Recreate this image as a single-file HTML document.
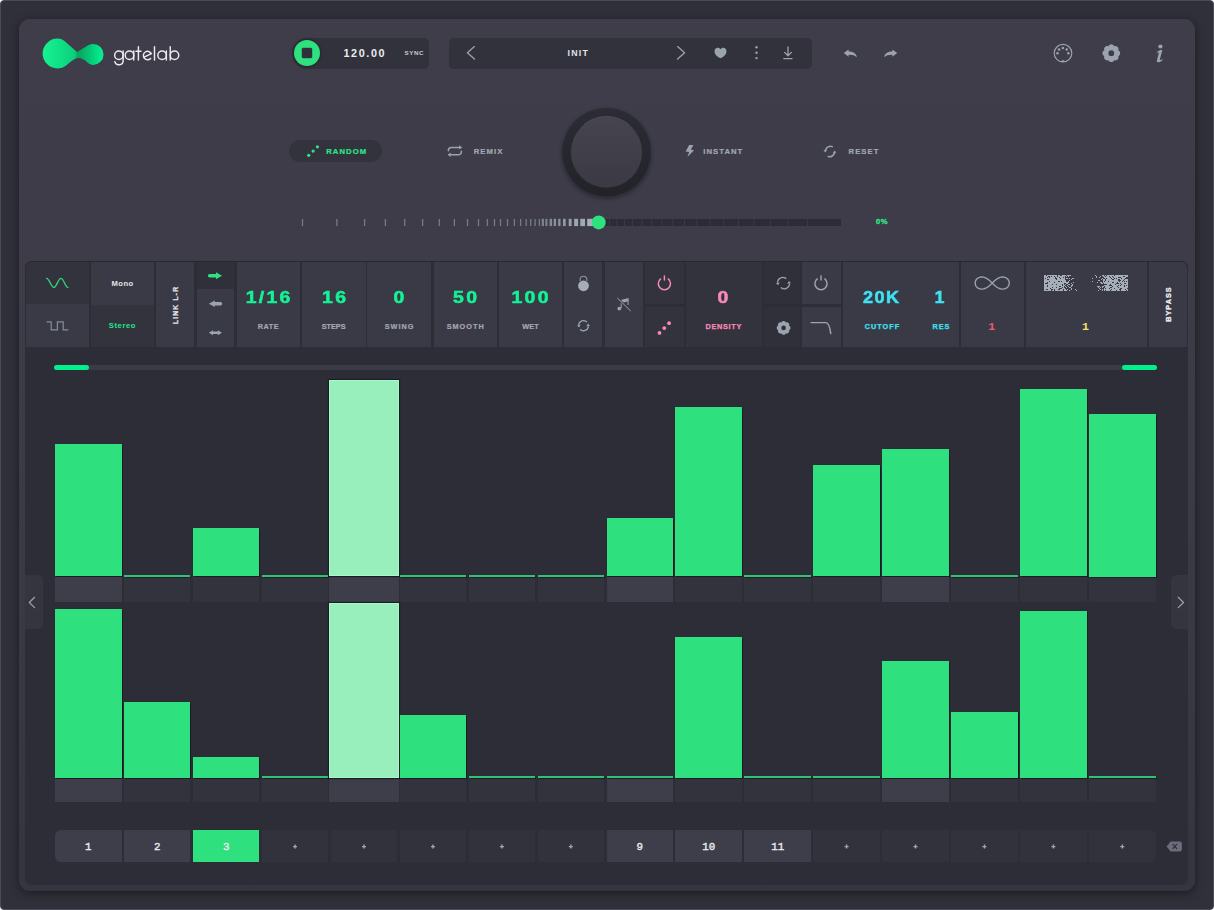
<!DOCTYPE html>
<html><head><meta charset="utf-8"><title>gatelab</title>
<style>html,body{margin:0;padding:0;background:#fff;width:1214px;height:910px;overflow:hidden}</style>
</head><body>
<div style="position:relative;width:1214px;height:910px;overflow:hidden">
<div style="position:absolute;left:0;top:0;width:1214px;height:910px;box-sizing:border-box;border:1px solid #4a4a58;border-radius:4px;background:#30303a;overflow:hidden"></div><div style="position:absolute;left:19px;top:19px;width:1176px;height:872px;background:linear-gradient(#3e3d49,#3c3b47 40%,#36353f);border-radius:11px;box-shadow:0 2px 10px rgba(0,0,0,.45);"></div><div style="position:absolute;left:292px;top:38px;width:137px;height:31px;background:#32323c;border-radius:15.5px 5px 5px 15.5px;"></div><div style="position:absolute;left:294.1px;top:39.9px;width:26.4px;height:26.4px;background:#2fe07f;border-radius:50%;box-shadow:0 0 3px 0.5px rgba(20,16,28,.5);"></div><div style="position:absolute;left:302.3px;top:48.2px;width:9.9px;height:10.2px;background:#30303b;border-radius:1.3px;box-shadow:0 0 0.5px 0.5px rgba(20,16,28,.35);"></div><div style="position:absolute;left:164.00px;top:48.26px;width:400px;text-align:center;font:700 10.8px/10.8px 'Liberation Sans', sans-serif;letter-spacing:1.6px;text-indent:1.6px;color:#ececf0;white-space:nowrap;">120.00</div><div style="position:absolute;left:214.00px;top:50.15px;width:400px;text-align:center;font:700 6.2px/6.2px 'Liberation Sans', sans-serif;letter-spacing:0.6px;text-indent:0.6px;color:#c9cad2;white-space:nowrap;">SYNC</div><div style="position:absolute;left:449px;top:38px;width:363px;height:31px;background:#32323c;border-radius:5px;"></div><div style="position:absolute;left:377.70px;top:48.85px;width:400px;text-align:center;font:700 8.8px/8.8px 'Liberation Sans', sans-serif;letter-spacing:1.2px;text-indent:1.2px;color:#e2e2e8;white-space:nowrap;">INIT</div><div style="position:absolute;left:289px;top:139.5px;width:93px;height:22.8px;background:#33333e;border-radius:12px;"></div><div style="position:absolute;left:146.20px;top:147.58px;width:400px;text-align:center;font:700 7.7px/7.7px 'Liberation Sans', sans-serif;letter-spacing:1.05px;text-indent:1.05px;color:#2ee68a;white-space:nowrap;-webkit-text-stroke:0.2px #2ee68a">RANDOM</div><div style="position:absolute;left:288.00px;top:147.58px;width:400px;text-align:center;font:700 7.7px/7.7px 'Liberation Sans', sans-serif;letter-spacing:1.05px;text-indent:1.05px;color:#a3a8b3;white-space:nowrap;-webkit-text-stroke:0.2px #a3a8b3">REMIX</div><div style="position:absolute;left:522.80px;top:147.58px;width:400px;text-align:center;font:700 7.7px/7.7px 'Liberation Sans', sans-serif;letter-spacing:1.05px;text-indent:1.05px;color:#a3a8b3;white-space:nowrap;-webkit-text-stroke:0.2px #a3a8b3">INSTANT</div><div style="position:absolute;left:663.50px;top:147.58px;width:400px;text-align:center;font:700 7.7px/7.7px 'Liberation Sans', sans-serif;letter-spacing:1.05px;text-indent:1.05px;color:#a3a8b3;white-space:nowrap;-webkit-text-stroke:0.2px #a3a8b3">RESET</div><div style="position:absolute;left:681.80px;top:218.47px;width:400px;text-align:center;font:700 7.6px/7.6px 'Liberation Sans', sans-serif;letter-spacing:0.6px;text-indent:0.6px;color:#2ee68a;white-space:nowrap;-webkit-text-stroke:0.3px #2ee68a">0%</div><div style="position:absolute;left:25px;top:261px;width:1163px;height:623.5px;background:#2d2d37;border-radius:7px;box-shadow:inset 0 1px 0 #28282f;"></div><div style="position:absolute;left:26px;top:262px;width:63px;height:42.2px;background:#33333e;border-radius:5px 0 0 0;"></div><div style="position:absolute;left:26px;top:304.2px;width:63px;height:42.4px;background:#3a3a46;border-radius:0px;"></div><div style="position:absolute;left:91px;top:262px;width:63px;height:42.8px;background:#3a3a46;border-radius:0px;"></div><div style="position:absolute;left:91px;top:304.8px;width:63px;height:41.8px;background:#33333e;border-radius:0px;"></div><div style="position:absolute;left:156.2px;top:262px;width:38.1px;height:84.6px;background:#3a3a46;border-radius:0px;"></div><div style="position:absolute;left:196.6px;top:262px;width:37.4px;height:27.4px;background:#30303a;border-radius:0px;"></div><div style="position:absolute;left:196.6px;top:289.4px;width:37.4px;height:57.2px;background:#3a3a46;border-radius:0px;"></div><div style="position:absolute;left:237px;top:262px;width:63.3px;height:84.6px;background:#3a3a46;border-radius:0px;"></div><div style="position:absolute;left:302.1px;top:262px;width:63.5px;height:84.6px;background:#3a3a46;border-radius:0px;"></div><div style="position:absolute;left:367.4px;top:262px;width:63.2px;height:84.6px;background:#3a3a46;border-radius:0px;"></div><div style="position:absolute;left:433.7px;top:262px;width:63.4px;height:84.6px;background:#3a3a46;border-radius:0px;"></div><div style="position:absolute;left:498.9px;top:262px;width:62.9px;height:84.6px;background:#3a3a46;border-radius:0px;"></div><div style="position:absolute;left:564.2px;top:262px;width:38.0px;height:84.6px;background:#3a3a46;border-radius:0px;"></div><div style="position:absolute;left:604.8px;top:262px;width:37.8px;height:84.6px;background:#3a3a46;border-radius:0px;"></div><div style="position:absolute;left:645px;top:262px;width:38.6px;height:42.3px;background:#33333e;border-radius:0px;"></div><div style="position:absolute;left:645px;top:306.6px;width:38.6px;height:40.0px;background:#33333e;border-radius:0px;"></div><div style="position:absolute;left:686.1px;top:262px;width:75.8px;height:84.6px;background:#33333e;border-radius:0px;"></div><div style="position:absolute;left:764.2px;top:262px;width:35.4px;height:42.3px;background:#30303a;border-radius:0px;"></div><div style="position:absolute;left:764.2px;top:306.6px;width:35.4px;height:40.0px;background:#30303a;border-radius:0px;"></div><div style="position:absolute;left:801.7px;top:262px;width:39.0px;height:42.3px;background:#3a3a46;border-radius:0px;"></div><div style="position:absolute;left:801.7px;top:306.6px;width:39.0px;height:40.0px;background:#3a3a46;border-radius:0px;"></div><div style="position:absolute;left:843.2px;top:262px;width:115.9px;height:84.6px;background:#3a3a46;border-radius:0px;"></div><div style="position:absolute;left:961px;top:262px;width:63.2px;height:84.6px;background:#3a3a46;border-radius:0px;"></div><div style="position:absolute;left:1026.1px;top:262px;width:120.9px;height:84.6px;background:#3a3a46;border-radius:0px;"></div><div style="position:absolute;left:1148.6px;top:262px;width:38.6px;height:84.6px;background:#3a3a46;border-radius:0 6px 0 0;"></div><div style="position:absolute;left:-77.70px;top:279.87px;width:400px;text-align:center;font:700 7.6px/7.6px 'Liberation Sans', sans-serif;letter-spacing:0.5px;text-indent:0.5px;color:#e4e4ea;white-space:nowrap;">Mono</div><div style="position:absolute;left:-77.90px;top:322.37px;width:400px;text-align:center;font:700 7.6px/7.6px 'Liberation Sans', sans-serif;letter-spacing:0.6px;text-indent:0.6px;color:#1ee98a;white-space:nowrap;">Stereo</div><div style="position:absolute;left:-24.15px;top:301.73px;width:400px;height:7.3px;text-align:center;font:700 7.3px/7.3px 'Liberation Sans', sans-serif;letter-spacing:0.9px;text-indent:0.9px;color:#e8e8ee;white-space:nowrap;transform:rotate(-90deg);transform-origin:200px 3.57px;-webkit-text-stroke:0.2px #e8e8ee">LINK L-R</div><div style="position:absolute;left:68.20px;top:289.04px;width:400px;text-align:center;font:700 17.2px/17.2px 'Liberation Sans', sans-serif;letter-spacing:2.0px;text-indent:2.0px;color:#14f295;white-space:nowrap;-webkit-text-stroke:0.55px #14f295;transform:scaleX(1.13)">1/16</div><div style="position:absolute;left:68.20px;top:323.02px;width:400px;text-align:center;font:700 7.3px/7.3px 'Liberation Sans', sans-serif;letter-spacing:0.5px;text-indent:0.5px;color:#a3a8b3;white-space:nowrap;-webkit-text-stroke:0.2px #a3a8b3">RATE</div><div style="position:absolute;left:133.60px;top:289.04px;width:400px;text-align:center;font:700 17.2px/17.2px 'Liberation Sans', sans-serif;letter-spacing:2.0px;text-indent:2.0px;color:#14f295;white-space:nowrap;-webkit-text-stroke:0.55px #14f295;transform:scaleX(1.13)">16</div><div style="position:absolute;left:133.60px;top:323.02px;width:400px;text-align:center;font:700 7.3px/7.3px 'Liberation Sans', sans-serif;letter-spacing:0.0px;text-indent:0.0px;color:#a3a8b3;white-space:nowrap;-webkit-text-stroke:0.2px #a3a8b3">STEPS</div><div style="position:absolute;left:199.00px;top:289.04px;width:400px;text-align:center;font:700 17.2px/17.2px 'Liberation Sans', sans-serif;letter-spacing:2.0px;text-indent:2.0px;color:#14f295;white-space:nowrap;-webkit-text-stroke:0.55px #14f295;transform:scaleX(1.13)">0</div><div style="position:absolute;left:199.00px;top:323.02px;width:400px;text-align:center;font:700 7.3px/7.3px 'Liberation Sans', sans-serif;letter-spacing:1.0px;text-indent:1.0px;color:#a3a8b3;white-space:nowrap;-webkit-text-stroke:0.2px #a3a8b3">SWING</div><div style="position:absolute;left:265.20px;top:289.04px;width:400px;text-align:center;font:700 17.2px/17.2px 'Liberation Sans', sans-serif;letter-spacing:2.0px;text-indent:2.0px;color:#14f295;white-space:nowrap;-webkit-text-stroke:0.55px #14f295;transform:scaleX(1.13)">50</div><div style="position:absolute;left:265.20px;top:323.02px;width:400px;text-align:center;font:700 7.3px/7.3px 'Liberation Sans', sans-serif;letter-spacing:1.0px;text-indent:1.0px;color:#a3a8b3;white-space:nowrap;-webkit-text-stroke:0.2px #a3a8b3">SMOOTH</div><div style="position:absolute;left:330.40px;top:289.04px;width:400px;text-align:center;font:700 17.2px/17.2px 'Liberation Sans', sans-serif;letter-spacing:2.0px;text-indent:2.0px;color:#14f295;white-space:nowrap;-webkit-text-stroke:0.55px #14f295;transform:scaleX(1.13)">100</div><div style="position:absolute;left:330.40px;top:323.02px;width:400px;text-align:center;font:700 7.3px/7.3px 'Liberation Sans', sans-serif;letter-spacing:0.1px;text-indent:0.1px;color:#a3a8b3;white-space:nowrap;-webkit-text-stroke:0.2px #a3a8b3">WET</div><div style="position:absolute;left:522.60px;top:289.04px;width:400px;text-align:center;font:700 17.2px/17.2px 'Liberation Sans', sans-serif;letter-spacing:2.0px;text-indent:2.0px;color:#f78ab8;white-space:nowrap;-webkit-text-stroke:0.55px #f78ab8;transform:scaleX(1.13)">0</div><div style="position:absolute;left:523.40px;top:323.22px;width:400px;text-align:center;font:700 7.3px/7.3px 'Liberation Sans', sans-serif;letter-spacing:0.7px;text-indent:0.7px;color:#f78ab8;white-space:nowrap;-webkit-text-stroke:0.25px #f78ab8">DENSITY</div><div style="position:absolute;left:681.20px;top:289.04px;width:400px;text-align:center;font:700 17.2px/17.2px 'Liberation Sans', sans-serif;letter-spacing:1.4px;text-indent:1.4px;color:#3ee2f3;white-space:nowrap;-webkit-text-stroke:0.55px #3ee2f3;transform:scaleX(1.05)">20K</div><div style="position:absolute;left:739.50px;top:289.04px;width:400px;text-align:center;font:700 17.2px/17.2px 'Liberation Sans', sans-serif;letter-spacing:2.0px;text-indent:2.0px;color:#3ee2f3;white-space:nowrap;-webkit-text-stroke:0.55px #3ee2f3">1</div><div style="position:absolute;left:681.90px;top:323.22px;width:400px;text-align:center;font:700 7.3px/7.3px 'Liberation Sans', sans-serif;letter-spacing:1.0px;text-indent:1.0px;color:#3ee2f3;white-space:nowrap;-webkit-text-stroke:0.25px #3ee2f3">CUTOFF</div><div style="position:absolute;left:741.00px;top:323.22px;width:400px;text-align:center;font:700 7.3px/7.3px 'Liberation Sans', sans-serif;letter-spacing:1.0px;text-indent:1.0px;color:#3ee2f3;white-space:nowrap;-webkit-text-stroke:0.25px #3ee2f3">RES</div><div style="position:absolute;left:941.6px;top:321.40px;width:100px;text-align:center;font:700 11.5px/11.5px 'Liberation Mono', monospace;color:#f25a6e">1</div><div style="position:absolute;left:1035.4px;top:321.40px;width:100px;text-align:center;font:700 11.5px/11.5px 'Liberation Mono', monospace;color:#f2e46a">1</div><div style="position:absolute;left:968.70px;top:301.43px;width:400px;height:7.3px;text-align:center;font:700 7.3px/7.3px 'Liberation Sans', sans-serif;letter-spacing:1.0px;text-indent:1.0px;color:#f0f0f4;white-space:nowrap;transform:rotate(-90deg);transform-origin:200px 3.57px;-webkit-text-stroke:0.3px #f0f0f4">BYPASS</div><div style="position:absolute;left:54px;top:365px;width:1103px;height:5px;background:#3b3b47;border-radius:2.5px;"></div><div style="position:absolute;left:54px;top:365px;width:34.6px;height:5px;background:#00f08e;border-radius:2.5px;"></div><div style="position:absolute;left:1122px;top:365px;width:35px;height:5px;background:#00f08e;border-radius:2.5px;"></div><div style="position:absolute;left:55.0px;top:577px;width:66.5px;height:25.3px;background:#3e3d4a;border-radius:0px;"></div><div style="position:absolute;left:55.0px;top:444.4px;width:66.5px;height:132.1px;background:#2fe07f;border-radius:0px;box-shadow:0 0 1px 0.5px rgba(25,18,32,.7);"></div><div style="position:absolute;left:55.0px;top:778.9px;width:66.5px;height:22.9px;background:#3e3d4a;border-radius:0px;"></div><div style="position:absolute;left:55.0px;top:608.8px;width:66.5px;height:169.4px;background:#2fe07f;border-radius:0px;box-shadow:0 0 1px 0.5px rgba(25,18,32,.7);"></div><div style="position:absolute;left:123.94px;top:577px;width:66.5px;height:25.3px;background:#33333d;border-radius:0px;"></div><div style="position:absolute;left:123.94px;top:574.5px;width:66.5px;height:2px;background:#2cc472;border-radius:0px;box-shadow:0 0 1px 0.5px rgba(25,18,32,.6);"></div><div style="position:absolute;left:123.94px;top:778.9px;width:66.5px;height:22.9px;background:#33333d;border-radius:0px;"></div><div style="position:absolute;left:123.94px;top:702.3px;width:66.5px;height:75.9px;background:#2fe07f;border-radius:0px;box-shadow:0 0 1px 0.5px rgba(25,18,32,.7);"></div><div style="position:absolute;left:192.88px;top:577px;width:66.5px;height:25.3px;background:#33333d;border-radius:0px;"></div><div style="position:absolute;left:192.88px;top:528.2px;width:66.5px;height:48.3px;background:#2fe07f;border-radius:0px;box-shadow:0 0 1px 0.5px rgba(25,18,32,.7);"></div><div style="position:absolute;left:192.88px;top:778.9px;width:66.5px;height:22.9px;background:#33333d;border-radius:0px;"></div><div style="position:absolute;left:192.88px;top:757.1px;width:66.5px;height:21.1px;background:#2fe07f;border-radius:0px;box-shadow:0 0 1px 0.5px rgba(25,18,32,.7);"></div><div style="position:absolute;left:261.82px;top:577px;width:66.5px;height:25.3px;background:#33333d;border-radius:0px;"></div><div style="position:absolute;left:261.82px;top:574.5px;width:66.5px;height:2px;background:#2cc472;border-radius:0px;box-shadow:0 0 1px 0.5px rgba(25,18,32,.6);"></div><div style="position:absolute;left:261.82px;top:778.9px;width:66.5px;height:22.9px;background:#33333d;border-radius:0px;"></div><div style="position:absolute;left:261.82px;top:776.2px;width:66.5px;height:2px;background:#2cc472;border-radius:0px;box-shadow:0 0 1px 0.5px rgba(25,18,32,.6);"></div><div style="position:absolute;left:329.36px;top:577px;width:69.3px;height:25.3px;background:#3e3d4a;border-radius:0px;"></div><div style="position:absolute;left:329.36px;top:379.6px;width:69.3px;height:196.9px;background:#98efbc;border-radius:0px;box-shadow:inset 0 0 0 1px #a4fbc9,0 0 1px 1px rgba(20,15,30,.6);"></div><div style="position:absolute;left:329.36px;top:778.9px;width:69.3px;height:22.9px;background:#3e3d4a;border-radius:0px;"></div><div style="position:absolute;left:329.36px;top:602.6px;width:69.3px;height:175.6px;background:#98efbc;border-radius:0px;box-shadow:inset 0 0 0 1px #a4fbc9,0 0 1px 1px rgba(20,15,30,.6);"></div><div style="position:absolute;left:399.7px;top:577px;width:66.5px;height:25.3px;background:#33333d;border-radius:0px;"></div><div style="position:absolute;left:399.7px;top:574.5px;width:66.5px;height:2px;background:#2cc472;border-radius:0px;box-shadow:0 0 1px 0.5px rgba(25,18,32,.6);"></div><div style="position:absolute;left:399.7px;top:778.9px;width:66.5px;height:22.9px;background:#33333d;border-radius:0px;"></div><div style="position:absolute;left:399.7px;top:715.1px;width:66.5px;height:63.1px;background:#2fe07f;border-radius:0px;box-shadow:0 0 1px 0.5px rgba(25,18,32,.7);"></div><div style="position:absolute;left:468.64px;top:577px;width:66.5px;height:25.3px;background:#33333d;border-radius:0px;"></div><div style="position:absolute;left:468.64px;top:574.5px;width:66.5px;height:2px;background:#2cc472;border-radius:0px;box-shadow:0 0 1px 0.5px rgba(25,18,32,.6);"></div><div style="position:absolute;left:468.64px;top:778.9px;width:66.5px;height:22.9px;background:#33333d;border-radius:0px;"></div><div style="position:absolute;left:468.64px;top:776.2px;width:66.5px;height:2px;background:#2cc472;border-radius:0px;box-shadow:0 0 1px 0.5px rgba(25,18,32,.6);"></div><div style="position:absolute;left:537.58px;top:577px;width:66.5px;height:25.3px;background:#33333d;border-radius:0px;"></div><div style="position:absolute;left:537.58px;top:574.5px;width:66.5px;height:2px;background:#2cc472;border-radius:0px;box-shadow:0 0 1px 0.5px rgba(25,18,32,.6);"></div><div style="position:absolute;left:537.58px;top:778.9px;width:66.5px;height:22.9px;background:#33333d;border-radius:0px;"></div><div style="position:absolute;left:537.58px;top:776.2px;width:66.5px;height:2px;background:#2cc472;border-radius:0px;box-shadow:0 0 1px 0.5px rgba(25,18,32,.6);"></div><div style="position:absolute;left:606.52px;top:577px;width:66.5px;height:25.3px;background:#3e3d4a;border-radius:0px;"></div><div style="position:absolute;left:606.52px;top:518.3px;width:66.5px;height:58.2px;background:#2fe07f;border-radius:0px;box-shadow:0 0 1px 0.5px rgba(25,18,32,.7);"></div><div style="position:absolute;left:606.52px;top:778.9px;width:66.5px;height:22.9px;background:#3e3d4a;border-radius:0px;"></div><div style="position:absolute;left:606.52px;top:776.2px;width:66.5px;height:2px;background:#2cc472;border-radius:0px;box-shadow:0 0 1px 0.5px rgba(25,18,32,.6);"></div><div style="position:absolute;left:675.46px;top:577px;width:66.5px;height:25.3px;background:#33333d;border-radius:0px;"></div><div style="position:absolute;left:675.46px;top:407.1px;width:66.5px;height:169.4px;background:#2fe07f;border-radius:0px;box-shadow:0 0 1px 0.5px rgba(25,18,32,.7);"></div><div style="position:absolute;left:675.46px;top:778.9px;width:66.5px;height:22.9px;background:#33333d;border-radius:0px;"></div><div style="position:absolute;left:675.46px;top:637px;width:66.5px;height:141.2px;background:#2fe07f;border-radius:0px;box-shadow:0 0 1px 0.5px rgba(25,18,32,.7);"></div><div style="position:absolute;left:744.4px;top:577px;width:66.5px;height:25.3px;background:#33333d;border-radius:0px;"></div><div style="position:absolute;left:744.4px;top:574.5px;width:66.5px;height:2px;background:#2cc472;border-radius:0px;box-shadow:0 0 1px 0.5px rgba(25,18,32,.6);"></div><div style="position:absolute;left:744.4px;top:778.9px;width:66.5px;height:22.9px;background:#33333d;border-radius:0px;"></div><div style="position:absolute;left:744.4px;top:776.2px;width:66.5px;height:2px;background:#2cc472;border-radius:0px;box-shadow:0 0 1px 0.5px rgba(25,18,32,.6);"></div><div style="position:absolute;left:813.34px;top:577px;width:66.5px;height:25.3px;background:#33333d;border-radius:0px;"></div><div style="position:absolute;left:813.34px;top:464.9px;width:66.5px;height:111.6px;background:#2fe07f;border-radius:0px;box-shadow:0 0 1px 0.5px rgba(25,18,32,.7);"></div><div style="position:absolute;left:813.34px;top:778.9px;width:66.5px;height:22.9px;background:#33333d;border-radius:0px;"></div><div style="position:absolute;left:813.34px;top:776.2px;width:66.5px;height:2px;background:#2cc472;border-radius:0px;box-shadow:0 0 1px 0.5px rgba(25,18,32,.6);"></div><div style="position:absolute;left:882.28px;top:577px;width:66.5px;height:25.3px;background:#3e3d4a;border-radius:0px;"></div><div style="position:absolute;left:882.28px;top:449.1px;width:66.5px;height:127.4px;background:#2fe07f;border-radius:0px;box-shadow:0 0 1px 0.5px rgba(25,18,32,.7);"></div><div style="position:absolute;left:882.28px;top:778.9px;width:66.5px;height:22.9px;background:#3e3d4a;border-radius:0px;"></div><div style="position:absolute;left:882.28px;top:660.7px;width:66.5px;height:117.5px;background:#2fe07f;border-radius:0px;box-shadow:0 0 1px 0.5px rgba(25,18,32,.7);"></div><div style="position:absolute;left:951.22px;top:577px;width:66.5px;height:25.3px;background:#33333d;border-radius:0px;"></div><div style="position:absolute;left:951.22px;top:574.5px;width:66.5px;height:2px;background:#2cc472;border-radius:0px;box-shadow:0 0 1px 0.5px rgba(25,18,32,.6);"></div><div style="position:absolute;left:951.22px;top:778.9px;width:66.5px;height:22.9px;background:#33333d;border-radius:0px;"></div><div style="position:absolute;left:951.22px;top:712.2px;width:66.5px;height:66.0px;background:#2fe07f;border-radius:0px;box-shadow:0 0 1px 0.5px rgba(25,18,32,.7);"></div><div style="position:absolute;left:1020.16px;top:577px;width:66.5px;height:25.3px;background:#33333d;border-radius:0px;"></div><div style="position:absolute;left:1020.16px;top:388.8px;width:66.5px;height:187.7px;background:#2fe07f;border-radius:0px;box-shadow:0 0 1px 0.5px rgba(25,18,32,.7);"></div><div style="position:absolute;left:1020.16px;top:778.9px;width:66.5px;height:22.9px;background:#33333d;border-radius:0px;"></div><div style="position:absolute;left:1020.16px;top:610.8px;width:66.5px;height:167.4px;background:#2fe07f;border-radius:0px;box-shadow:0 0 1px 0.5px rgba(25,18,32,.7);"></div><div style="position:absolute;left:1089.1px;top:577px;width:66.5px;height:25.3px;background:#33333d;border-radius:0px;"></div><div style="position:absolute;left:1089.1px;top:414px;width:66.5px;height:162.5px;background:#2fe07f;border-radius:0px;box-shadow:0 0 1px 0.5px rgba(25,18,32,.7);"></div><div style="position:absolute;left:1089.1px;top:778.9px;width:66.5px;height:22.9px;background:#33333d;border-radius:0px;"></div><div style="position:absolute;left:1089.1px;top:776.2px;width:66.5px;height:2px;background:#2cc472;border-radius:0px;box-shadow:0 0 1px 0.5px rgba(25,18,32,.6);"></div><div style="position:absolute;left:25px;top:575px;width:17.6px;height:54px;background:#35353f;border-radius:0 5px 5px 0;"></div><div style="position:absolute;left:1171px;top:575.4px;width:17px;height:54px;background:#35353f;border-radius:5px 0 0 5px;"></div><div style="position:absolute;left:55.0px;top:830.4px;width:66.5px;height:32px;background:#3e3d4a;border-radius:6px 0 0 6px;"></div><div style="position:absolute;left:38.25px;top:842.16px;width:100px;text-align:center;font:400 10.8px/10.8px 'Liberation Mono', monospace;-webkit-text-stroke:0.4px #e8e8ee;color:#e8e8ee">1</div><div style="position:absolute;left:123.94px;top:830.4px;width:66.5px;height:32px;background:#3e3d4a;border-radius:0px;"></div><div style="position:absolute;left:107.19px;top:842.16px;width:100px;text-align:center;font:400 10.8px/10.8px 'Liberation Mono', monospace;-webkit-text-stroke:0.4px #e8e8ee;color:#e8e8ee">2</div><div style="position:absolute;left:192.88px;top:830.4px;width:66.5px;height:32px;background:#2fe07f;border-radius:0px;"></div><div style="position:absolute;left:176.13px;top:842.16px;width:100px;text-align:center;font:400 10.8px/10.8px 'Liberation Mono', monospace;-webkit-text-stroke:0.4px #e8e8ee;color:#e8e8ee">3</div><div style="position:absolute;left:261.82px;top:830.4px;width:66.5px;height:32px;background:#32323c;border-radius:0px;"></div><div style="position:absolute;left:330.76px;top:830.4px;width:66.5px;height:32px;background:#32323c;border-radius:0px;"></div><div style="position:absolute;left:399.7px;top:830.4px;width:66.5px;height:32px;background:#32323c;border-radius:0px;"></div><div style="position:absolute;left:468.64px;top:830.4px;width:66.5px;height:32px;background:#32323c;border-radius:0px;"></div><div style="position:absolute;left:537.58px;top:830.4px;width:66.5px;height:32px;background:#32323c;border-radius:0px;"></div><div style="position:absolute;left:606.52px;top:830.4px;width:66.5px;height:32px;background:#3e3d4a;border-radius:0px;"></div><div style="position:absolute;left:589.77px;top:842.16px;width:100px;text-align:center;font:400 10.8px/10.8px 'Liberation Mono', monospace;-webkit-text-stroke:0.4px #e8e8ee;color:#e8e8ee">9</div><div style="position:absolute;left:675.46px;top:830.4px;width:66.5px;height:32px;background:#3e3d4a;border-radius:0px;"></div><div style="position:absolute;left:658.71px;top:842.16px;width:100px;text-align:center;font:400 10.8px/10.8px 'Liberation Mono', monospace;-webkit-text-stroke:0.4px #e8e8ee;color:#e8e8ee">10</div><div style="position:absolute;left:744.4px;top:830.4px;width:66.5px;height:32px;background:#3e3d4a;border-radius:0px;"></div><div style="position:absolute;left:727.65px;top:842.16px;width:100px;text-align:center;font:400 10.8px/10.8px 'Liberation Mono', monospace;-webkit-text-stroke:0.4px #e8e8ee;color:#e8e8ee">11</div><div style="position:absolute;left:813.34px;top:830.4px;width:66.5px;height:32px;background:#32323c;border-radius:0px;"></div><div style="position:absolute;left:882.28px;top:830.4px;width:66.5px;height:32px;background:#32323c;border-radius:0px;"></div><div style="position:absolute;left:951.22px;top:830.4px;width:66.5px;height:32px;background:#32323c;border-radius:0px;"></div><div style="position:absolute;left:1020.16px;top:830.4px;width:66.5px;height:32px;background:#32323c;border-radius:0px;"></div><div style="position:absolute;left:1089.1px;top:830.4px;width:66.5px;height:32px;background:#32323c;border-radius:0 6px 6px 0;"></div>
<svg style="position:absolute;left:0;top:0" width="1214" height="910" viewBox="0 0 1214 910">

<defs>
<linearGradient id="lg" x1="43" y1="0" x2="104" y2="0" gradientUnits="userSpaceOnUse">
<stop offset="0" stop-color="#16f292"/><stop offset="0.3" stop-color="#0fdf85"/><stop offset="0.52" stop-color="#0bcf7b"/><stop offset="0.57" stop-color="#03a45c"/><stop offset="0.75" stop-color="#06c473"/><stop offset="1" stop-color="#00f794"/>
</linearGradient>
<linearGradient id="knobg" x1="0" y1="116" x2="0" y2="188" gradientUnits="userSpaceOnUse">
<stop offset="0" stop-color="#46454f"/><stop offset="1" stop-color="#3a3944"/>
</linearGradient>
<linearGradient id="ringg" x1="0" y1="108" x2="0" y2="196" gradientUnits="userSpaceOnUse">
<stop offset="0" stop-color="#2c2c35"/><stop offset="1" stop-color="#222229"/>
</linearGradient>
<filter id="blur2" x="-20%" y="-20%" width="140%" height="140%"><feGaussianBlur stdDeviation="1.5"/></filter></defs>
<path fill="url(#lg)" d="M57.6 38.5 C60.6 38.5 63 39.6 65 41.4 L77 52.1 L88.6 45.1 C90 44.4 91.6 44 93.1 44 A10.45 10.45 0 0 1 93.1 64.9 C90.6 64.9 88.8 63.8 87.2 62.3 C84.6 59.8 81.6 58 78.2 58.1 C74 58.3 70.2 62.6 66.2 65.4 C63.6 67.3 60.8 68.4 57.6 68.4 A14.95 14.95 0 0 1 57.6 38.5 Z"/>
<g fill="none" stroke="#ebebef" stroke-width="1.45" stroke-linecap="round">
<circle cx="118.9" cy="55.3" r="4.25"/><path d="M123.15 51 V60.4 A4.25 4.25 0 0 1 114.8 61.6"/>
<circle cx="129.5" cy="55.3" r="4.25"/><path d="M133.75 51 V60.1"/>
<path d="M138.4 46.7 V60.1 M135.9 51.2 H141"/>
<path d="M143.6 57.3 L151.3 53.6 A4.2 4.2 0 1 0 150.6 58.4"/>
<path d="M154.5 46.7 V60.1"/>
<circle cx="162.1" cy="55.3" r="4.25"/><path d="M166.35 51 V60.1"/>
<path d="M170.25 46.7 V60.1"/><circle cx="174.5" cy="55.3" r="4.25"/>
</g>
<g fill="none" stroke="#9ba3ae" stroke-width="1.3" stroke-linecap="round" stroke-linejoin="round">
<path d="M474.4 46.6 L467.4 52.8 L474.4 59"/>
<path d="M677.6 46.6 L684.6 52.8 L677.6 59"/>
<path d="M788 46.8 V55.5 M784.6 52.4 L788 55.8 L791.4 52.4"/>
<path d="M783.8 58.7 H792"/>
</g>
<g fill="#9ba3ae">
<path d="M720.5 58.3 C716.8 56.6 714.5 54.2 714.5 51.4 C714.5 49.2 716 47.8 717.8 47.8 C719.1 47.8 720 48.5 720.5 49.3 C721 48.5 721.9 47.8 723.2 47.8 C725 47.8 726.5 49.2 726.5 51.4 C726.5 54.2 724.2 56.6 720.5 58.3 Z"/>
<circle cx="756.5" cy="47.2" r="1.2"/><circle cx="756.5" cy="52.7" r="1.2"/><circle cx="756.5" cy="58.1" r="1.2"/>
<path d="M843.8 53 L848.6 49.4 V51.6 C853 51.6 856.5 53.5 856.8 57.2 C855 55.4 852.4 54.6 848.6 54.7 V56.8 Z"/>
<path d="M897.2 53 L892.4 49.4 V51.6 C888 51.6 884.5 53.5 884.2 57.2 C886 55.4 888.6 54.6 892.4 54.7 V56.8 Z"/>
</g>
<g>
<circle cx="1063" cy="53.2" r="8.8" fill="none" stroke="#9ba3ae" stroke-width="1.15"/>
<g fill="#9ba3ae"><circle cx="1057.5" cy="53.2" r="1.25"/><circle cx="1059.1" cy="49.6" r="1.25"/><circle cx="1062.9" cy="48" r="1.25"/><circle cx="1066.7" cy="49.6" r="1.25"/><circle cx="1068.3" cy="53.2" r="1.25"/>
<path d="M1060.9 61.9 C1061.2 60.8 1062 60.2 1063 60.2 C1064 60.2 1064.8 60.8 1065.1 61.9 Z"/></g>
</g>
<path fill="#9ba3ae" fill-rule="evenodd" d="M1120.15 53.20 L1120.14 53.43 L1120.12 53.66 L1120.08 53.89 L1120.02 54.12 L1119.95 54.34 L1119.86 54.56 L1119.76 54.77 L1119.64 54.97 L1119.51 55.17 L1119.36 55.36 L1119.19 55.54 L1119.00 55.70 L1118.78 55.85 L1118.52 55.97 L1118.09 56.01 L1118.37 56.35 L1118.46 56.62 L1118.51 56.87 L1118.53 57.12 L1118.52 57.37 L1118.50 57.61 L1118.45 57.85 L1118.39 58.07 L1118.31 58.30 L1118.22 58.51 L1118.12 58.72 L1118.00 58.92 L1117.86 59.11 L1117.72 59.29 L1117.56 59.46 L1117.39 59.62 L1117.21 59.76 L1117.02 59.90 L1116.82 60.02 L1116.61 60.12 L1116.40 60.21 L1116.17 60.29 L1115.95 60.35 L1115.71 60.40 L1115.47 60.42 L1115.22 60.43 L1114.97 60.41 L1114.72 60.36 L1114.45 60.27 L1114.11 59.99 L1114.07 60.42 L1113.95 60.68 L1113.80 60.90 L1113.64 61.09 L1113.46 61.26 L1113.27 61.41 L1113.07 61.54 L1112.87 61.66 L1112.66 61.76 L1112.44 61.85 L1112.22 61.92 L1111.99 61.98 L1111.76 62.02 L1111.53 62.04 L1111.30 62.05 L1111.07 62.04 L1110.84 62.02 L1110.61 61.98 L1110.38 61.92 L1110.16 61.85 L1109.94 61.76 L1109.73 61.66 L1109.53 61.54 L1109.33 61.41 L1109.14 61.26 L1108.96 61.09 L1108.80 60.90 L1108.65 60.68 L1108.53 60.42 L1108.49 59.99 L1108.15 60.27 L1107.88 60.36 L1107.63 60.41 L1107.38 60.43 L1107.13 60.42 L1106.89 60.40 L1106.65 60.35 L1106.43 60.29 L1106.20 60.21 L1105.99 60.12 L1105.78 60.02 L1105.58 59.90 L1105.39 59.76 L1105.21 59.62 L1105.04 59.46 L1104.88 59.29 L1104.74 59.11 L1104.60 58.92 L1104.48 58.72 L1104.38 58.51 L1104.29 58.30 L1104.21 58.07 L1104.15 57.85 L1104.10 57.61 L1104.08 57.37 L1104.07 57.12 L1104.09 56.87 L1104.14 56.62 L1104.23 56.35 L1104.51 56.01 L1104.08 55.97 L1103.82 55.85 L1103.60 55.70 L1103.41 55.54 L1103.24 55.36 L1103.09 55.17 L1102.96 54.97 L1102.84 54.77 L1102.74 54.56 L1102.65 54.34 L1102.58 54.12 L1102.52 53.89 L1102.48 53.66 L1102.46 53.43 L1102.45 53.20 L1102.46 52.97 L1102.48 52.74 L1102.52 52.51 L1102.58 52.28 L1102.65 52.06 L1102.74 51.84 L1102.84 51.63 L1102.96 51.43 L1103.09 51.23 L1103.24 51.04 L1103.41 50.86 L1103.60 50.70 L1103.82 50.55 L1104.08 50.43 L1104.51 50.39 L1104.23 50.05 L1104.14 49.78 L1104.09 49.53 L1104.07 49.28 L1104.08 49.03 L1104.10 48.79 L1104.15 48.55 L1104.21 48.33 L1104.29 48.10 L1104.38 47.89 L1104.48 47.68 L1104.60 47.48 L1104.74 47.29 L1104.88 47.11 L1105.04 46.94 L1105.21 46.78 L1105.39 46.64 L1105.58 46.50 L1105.78 46.38 L1105.99 46.28 L1106.20 46.19 L1106.43 46.11 L1106.65 46.05 L1106.89 46.00 L1107.13 45.98 L1107.38 45.97 L1107.63 45.99 L1107.88 46.04 L1108.15 46.13 L1108.49 46.41 L1108.53 45.98 L1108.65 45.72 L1108.80 45.50 L1108.96 45.31 L1109.14 45.14 L1109.33 44.99 L1109.53 44.86 L1109.73 44.74 L1109.94 44.64 L1110.16 44.55 L1110.38 44.48 L1110.61 44.42 L1110.84 44.38 L1111.07 44.36 L1111.30 44.35 L1111.53 44.36 L1111.76 44.38 L1111.99 44.42 L1112.22 44.48 L1112.44 44.55 L1112.66 44.64 L1112.87 44.74 L1113.07 44.86 L1113.27 44.99 L1113.46 45.14 L1113.64 45.31 L1113.80 45.50 L1113.95 45.72 L1114.07 45.98 L1114.11 46.41 L1114.45 46.13 L1114.72 46.04 L1114.97 45.99 L1115.22 45.97 L1115.47 45.98 L1115.71 46.00 L1115.95 46.05 L1116.17 46.11 L1116.40 46.19 L1116.61 46.28 L1116.82 46.38 L1117.02 46.50 L1117.21 46.64 L1117.39 46.78 L1117.56 46.94 L1117.72 47.11 L1117.86 47.29 L1118.00 47.48 L1118.12 47.68 L1118.22 47.89 L1118.31 48.10 L1118.39 48.33 L1118.45 48.55 L1118.50 48.79 L1118.52 49.03 L1118.53 49.28 L1118.51 49.53 L1118.46 49.78 L1118.37 50.05 L1118.09 50.39 L1118.52 50.43 L1118.78 50.55 L1119.00 50.70 L1119.19 50.86 L1119.36 51.04 L1119.51 51.23 L1119.64 51.43 L1119.76 51.63 L1119.86 51.84 L1119.95 52.06 L1120.02 52.28 L1120.08 52.51 L1120.12 52.74 L1120.14 52.97 Z M1114.20 53.20 A2.9 2.9 0 1 0 1108.40 53.20 A2.9 2.9 0 1 0 1114.20 53.20 Z"/><g fill="#9ba3ae"><circle cx="1160.4" cy="46.5" r="2.1"/>
<path d="M1156.2 52.6 C1157.6 51.4 1159 50.4 1160.4 50 L1162.4 50 L1159.9 59.3 C1159.7 60.1 1160.3 60.2 1162.7 58.9 L1162.4 60.3 C1160.6 61.9 1158.8 62.5 1157.8 62.3 C1156.9 62.1 1156.7 61.4 1156.9 60.6 L1158.9 52.6 C1158.2 52.5 1157.2 52.6 1156.2 52.6 Z"/></g><g fill="#2ee68a"><circle cx="308.7" cy="155.3" r="1.6"/><circle cx="313.1" cy="151.1" r="1.6"/><circle cx="317.4" cy="146.8" r="1.6"/></g>
<g fill="none" stroke="#9ba3ae" stroke-width="1.5" stroke-linecap="round" stroke-linejoin="round">
<path d="M448.3 150.8 C448.3 148.8 449.6 147.4 451.6 147.4 H459.8"/>
<path d="M461.4 151.2 C461.4 153.4 460.1 154.8 458.1 154.8 H449.6"/>
<path d="M825.4 150.2 A5.3 5.3 0 0 1 832.4 146.6"/>
<path d="M834.6 152.8 A5.3 5.3 0 0 1 828.2 156.6"/>
</g>
<g fill="#9ba3ae">
<path d="M459.2 145.2 L462.2 147.4 L459.2 149.6 Z"/>
<path d="M450.6 152.6 L447.6 154.8 L450.6 157 Z"/>
<path d="M689.2 145 L693.4 145 L690.8 149.6 L694 150.2 L687.4 156.9 L689.1 152 L685.6 151.6 Z"/>
<path d="M823.4 150.4 L827 149.6 L825.6 152.4 Z"/>
<path d="M836.4 152.6 L832.8 153.4 L834.4 150.4 Z"/>
</g>
<circle cx="606.6" cy="154" r="45.5" fill="#1e1e24" opacity="0.45" filter="url(#blur2)"/><circle cx="606.6" cy="152.2" r="44.2" fill="url(#ringg)"/>
<circle cx="606.5" cy="152.2" r="35.6" fill="url(#knobg)"/>
<path d="M584 124.5 A35.2 35.2 0 0 1 629 124.5" fill="none" stroke="#55545f" stroke-width="0.9" opacity="0.7"/>
<rect x="301.85" y="219" width="1.3" height="7" fill="#767b88"/><rect x="336.25" y="219" width="1.3" height="7" fill="#767b88"/><rect x="363.95" y="219" width="1.3" height="7" fill="#767b88"/><rect x="384.75" y="219" width="1.3" height="7" fill="#767b88"/><rect x="404.05" y="219" width="1.3" height="7" fill="#767b88"/><rect x="421.95" y="219" width="1.3" height="7" fill="#767b88"/><rect x="438.65" y="219" width="1.3" height="7" fill="#767b88"/><rect x="453.75" y="219" width="1.3" height="7" fill="#767b88"/><rect x="466.85" y="219" width="1.3" height="7" fill="#767b88"/><rect x="477.85" y="219" width="1.3" height="7" fill="#767b88"/><rect x="486.75" y="219" width="1.3" height="7" fill="#767b88"/><rect x="493.85" y="219" width="1.3" height="7" fill="#767b88"/><rect x="499.85" y="219" width="1.3" height="7" fill="#767b88"/><rect x="506.85" y="219" width="1.3" height="7" fill="#767b88"/><rect x="513.75" y="219" width="1.3" height="7" fill="#767b88"/><rect x="519.95" y="219" width="1.3" height="7" fill="#767b88"/><rect x="525.55" y="219" width="1.3" height="7" fill="#767b88"/><rect x="530.05" y="219" width="1.3" height="7" fill="#767b88"/><rect x="534.45" y="219" width="1.3" height="7" fill="#767b88"/><rect x="538.75" y="219" width="1.3" height="7" fill="#767b88"/><rect x="541.70" y="218.8" width="2.30" height="7.3" fill="rgb(122,128,140)"/><rect x="545.40" y="218.8" width="2.00" height="7.3" fill="rgb(127,133,145)"/><rect x="549.60" y="218.8" width="2.50" height="7.3" fill="rgb(132,138,151)"/><rect x="553.70" y="218.8" width="2.40" height="7.3" fill="rgb(137,144,156)"/><rect x="558.20" y="218.8" width="2.30" height="7.3" fill="rgb(142,149,162)"/><rect x="563.00" y="218.8" width="2.70" height="7.3" fill="rgb(147,154,167)"/><rect x="568.70" y="218.8" width="2.90" height="7.3" fill="rgb(152,160,173)"/><rect x="574.10" y="218.8" width="4.00" height="7.3" fill="rgb(157,165,178)"/><rect x="580.30" y="218.8" width="4.70" height="7.3" fill="rgb(162,170,184)"/><rect x="587.20" y="218.8" width="5.80" height="7.3" fill="rgb(168,176,190)"/><rect x="603" y="219" width="238" height="7" fill="#2c2c36"/><rect x="608.90" y="219" width="1" height="7" fill="#3a3a45"/><rect x="616.30" y="219" width="1" height="7" fill="#3a3a45"/><rect x="624.00" y="219" width="1" height="7" fill="#3a3a45"/><rect x="632.10" y="219" width="1" height="7" fill="#3a3a45"/><rect x="641.50" y="219" width="1" height="7" fill="#3a3a45"/><rect x="651.10" y="219" width="1" height="7" fill="#3a3a45"/><rect x="661.30" y="219" width="1" height="7" fill="#3a3a45"/><rect x="672.40" y="219" width="1" height="7" fill="#3a3a45"/><rect x="684.00" y="219" width="1" height="7" fill="#3a3a45"/><rect x="696.30" y="219" width="1" height="7" fill="#3a3a45"/><rect x="709.70" y="219" width="1" height="7" fill="#3a3a45"/><rect x="723.20" y="219" width="1" height="7" fill="#3a3a45"/><rect x="738.00" y="219" width="1" height="7" fill="#3a3a45"/><rect x="753.30" y="219" width="1" height="7" fill="#3a3a45"/><rect x="769.90" y="219" width="1" height="7" fill="#3a3a45"/><rect x="787.40" y="219" width="1" height="7" fill="#3a3a45"/><rect x="807.00" y="219" width="1" height="7" fill="#3a3a45"/><circle cx="598.7" cy="222.4" r="7" fill="#2fe07f"/><path d="M46.5 278.3 C49.5 278.3 51 287.4 53.8 287.4 C56.6 287.4 58.2 278.3 61 278.3 C63.8 278.3 65.2 287.4 67.9 287.4" fill="none" stroke="#2fd47c" stroke-width="1.35" stroke-linecap="round"/>
<path d="M46.5 321.9 H51.2 V329.9 H57.4 V321.9 H63.2 V329.9 H68.3" fill="none" stroke="#868c98" stroke-width="1.2"/>
<g fill="#2fe07f"><path d="M209.6 274.1 H216 V272.3 L222 275.8 L216 279.3 V277.5 H209.6 A1.7 1.7 0 0 1 209.6 274.1 Z"/></g>
<g fill="#9ba3ae"><path d="M208.8 303.8 L214.8 300.5 V302.1 H221 A1.8 1.8 0 0 1 221 305.5 H214.8 V307.1 Z"/>
<path d="M208.8 332.7 L213 330.2 V331.5 H217.8 V330.2 L222 332.7 L217.8 335.2 V333.9 H213 V335.2 Z"/></g>
<g fill="#a6adb8"><circle cx="583.5" cy="285.8" r="5.4"/></g>
<path d="M580.1 281 V279.6 A3.4 3.4 0 0 1 586.9 279.6 V281" fill="none" stroke="#8f95a0" stroke-width="1.1"/>
<g fill="none" stroke="#9ba3ae" stroke-width="1.3" stroke-linecap="round">
<path d="M578.6 324.4 A5 5 0 0 1 586.6 321.7"/><path d="M588.4 327 A5 5 0 0 1 580.5 329.7"/>
<path d="M777.5 282 A5.3 5.3 0 0 1 785.8 278.4"/><path d="M789.6 284.2 A5.3 5.3 0 0 1 781.2 287.8"/>
</g>
<g fill="#9ba3ae">
<path d="M577 325.5 L580.6 324.6 L579.2 327.6 Z"/><path d="M590 325.7 L586.4 326.6 L587.8 323.6 Z"/>
<path d="M776 283.2 L779.6 282.3 L778.2 285.3 Z"/><path d="M791 283 L787.4 283.9 L788.8 280.9 Z"/>
</g>
<g fill="#9ba3ae">
<circle cx="619.3" cy="308.6" r="1.9"/>
<path d="M620.7 308.3 V300 L628.6 298 V305 H627.6 V301.5 L621.7 303 V308.3 Z"/>
</g>
<path d="M617.3 298 L630.8 311.1" stroke="#3a3a46" stroke-width="2.4"/>
<path d="M617.3 298 L630.8 311.1" stroke="#9ba3ae" stroke-width="1"/>
<g fill="none" stroke="#f78ab8" stroke-width="1.45" stroke-linecap="round">
<path d="M660.6 278.9 A6.1 6.1 0 1 0 668.2 278.9"/><path d="M664.4 276 V280"/>
</g>
<g fill="#f78ab8"><circle cx="659.5" cy="332.9" r="1.9"/><circle cx="664.3" cy="328.1" r="1.9"/><circle cx="669.1" cy="323.2" r="1.9"/></g>
<g fill="none" stroke="#9ba3ae" stroke-width="1.45" stroke-linecap="round">
<path d="M817.2 278.9 A6.1 6.1 0 1 0 824.8 278.9"/><path d="M821 276 V280"/>
<path d="M811 322.6 H826 C828.2 322.6 829.6 325.5 830.8 333.6"/>
</g>
<path fill="#9ba3ae" fill-rule="evenodd" d="M790.50 327.90 L790.49 328.08 L790.47 328.26 L790.44 328.44 L790.40 328.61 L790.34 328.79 L790.27 328.96 L790.19 329.12 L790.10 329.28 L789.99 329.43 L789.87 329.58 L789.74 329.72 L789.59 329.84 L789.41 329.96 L789.21 330.05 L788.87 330.08 L789.09 330.34 L789.17 330.56 L789.21 330.76 L789.22 330.95 L789.22 331.15 L789.20 331.33 L789.17 331.52 L789.13 331.70 L789.07 331.87 L789.00 332.04 L788.91 332.20 L788.82 332.36 L788.72 332.51 L788.60 332.65 L788.48 332.78 L788.35 332.90 L788.21 333.02 L788.06 333.12 L787.90 333.21 L787.74 333.30 L787.57 333.37 L787.40 333.43 L787.22 333.47 L787.03 333.50 L786.85 333.52 L786.65 333.52 L786.46 333.51 L786.26 333.47 L786.04 333.39 L785.78 333.17 L785.75 333.51 L785.66 333.71 L785.54 333.89 L785.42 334.04 L785.28 334.17 L785.13 334.29 L784.98 334.40 L784.82 334.49 L784.66 334.57 L784.49 334.64 L784.31 334.70 L784.14 334.74 L783.96 334.77 L783.78 334.79 L783.60 334.80 L783.42 334.79 L783.24 334.77 L783.06 334.74 L782.89 334.70 L782.71 334.64 L782.54 334.57 L782.38 334.49 L782.22 334.40 L782.07 334.29 L781.92 334.17 L781.78 334.04 L781.66 333.89 L781.54 333.71 L781.45 333.51 L781.42 333.17 L781.16 333.39 L780.94 333.47 L780.74 333.51 L780.55 333.52 L780.35 333.52 L780.17 333.50 L779.98 333.47 L779.80 333.43 L779.63 333.37 L779.46 333.30 L779.30 333.21 L779.14 333.12 L778.99 333.02 L778.85 332.90 L778.72 332.78 L778.60 332.65 L778.48 332.51 L778.38 332.36 L778.29 332.20 L778.20 332.04 L778.13 331.87 L778.07 331.70 L778.03 331.52 L778.00 331.33 L777.98 331.15 L777.98 330.95 L777.99 330.76 L778.03 330.56 L778.11 330.34 L778.33 330.08 L777.99 330.05 L777.79 329.96 L777.61 329.84 L777.46 329.72 L777.33 329.58 L777.21 329.43 L777.10 329.28 L777.01 329.12 L776.93 328.96 L776.86 328.79 L776.80 328.61 L776.76 328.44 L776.73 328.26 L776.71 328.08 L776.70 327.90 L776.71 327.72 L776.73 327.54 L776.76 327.36 L776.80 327.19 L776.86 327.01 L776.93 326.84 L777.01 326.68 L777.10 326.52 L777.21 326.37 L777.33 326.22 L777.46 326.08 L777.61 325.96 L777.79 325.84 L777.99 325.75 L778.33 325.72 L778.11 325.46 L778.03 325.24 L777.99 325.04 L777.98 324.85 L777.98 324.65 L778.00 324.47 L778.03 324.28 L778.07 324.10 L778.13 323.93 L778.20 323.76 L778.29 323.60 L778.38 323.44 L778.48 323.29 L778.60 323.15 L778.72 323.02 L778.85 322.90 L778.99 322.78 L779.14 322.68 L779.30 322.59 L779.46 322.50 L779.63 322.43 L779.80 322.37 L779.98 322.33 L780.17 322.30 L780.35 322.28 L780.55 322.28 L780.74 322.29 L780.94 322.33 L781.16 322.41 L781.42 322.63 L781.45 322.29 L781.54 322.09 L781.66 321.91 L781.78 321.76 L781.92 321.63 L782.07 321.51 L782.22 321.40 L782.38 321.31 L782.54 321.23 L782.71 321.16 L782.89 321.10 L783.06 321.06 L783.24 321.03 L783.42 321.01 L783.60 321.00 L783.78 321.01 L783.96 321.03 L784.14 321.06 L784.31 321.10 L784.49 321.16 L784.66 321.23 L784.82 321.31 L784.98 321.40 L785.13 321.51 L785.28 321.63 L785.42 321.76 L785.54 321.91 L785.66 322.09 L785.75 322.29 L785.78 322.63 L786.04 322.41 L786.26 322.33 L786.46 322.29 L786.65 322.28 L786.85 322.28 L787.03 322.30 L787.22 322.33 L787.40 322.37 L787.57 322.43 L787.74 322.50 L787.90 322.59 L788.06 322.68 L788.21 322.78 L788.35 322.90 L788.48 323.02 L788.60 323.15 L788.72 323.29 L788.82 323.44 L788.91 323.60 L789.00 323.76 L789.07 323.93 L789.13 324.10 L789.17 324.28 L789.20 324.47 L789.22 324.65 L789.22 324.85 L789.21 325.04 L789.17 325.24 L789.09 325.46 L788.87 325.72 L789.21 325.75 L789.41 325.84 L789.59 325.96 L789.74 326.08 L789.87 326.22 L789.99 326.37 L790.10 326.52 L790.19 326.68 L790.27 326.84 L790.34 327.01 L790.40 327.19 L790.44 327.36 L790.47 327.54 L790.49 327.72 Z M785.90 327.90 A2.3 2.3 0 1 0 781.30 327.90 A2.3 2.3 0 1 0 785.90 327.90 Z"/>
<path d="M1009.25 283.05 L1009.18 283.94 L1008.97 284.80 L1008.64 285.62 L1008.19 286.37 L1007.64 287.04 L1007.00 287.62 L1006.31 288.11 L1005.56 288.49 L1004.80 288.77 L1004.01 288.96 L1003.23 289.06 L1002.45 289.08 L1001.69 289.02 L1000.95 288.91 L1000.24 288.73 L999.55 288.51 L998.89 288.25 L998.26 287.95 L997.65 287.62 L997.07 287.27 L996.51 286.89 L995.98 286.50 L995.46 286.10 L994.97 285.68 L994.48 285.26 L994.01 284.82 L993.55 284.38 L993.10 283.94 L992.65 283.50 L992.20 283.05 L991.75 282.60 L991.30 282.16 L990.85 281.72 L990.39 281.28 L989.92 280.84 L989.43 280.42 L988.94 280.00 L988.42 279.60 L987.89 279.21 L987.33 278.83 L986.75 278.48 L986.14 278.15 L985.51 277.85 L984.85 277.59 L984.16 277.37 L983.45 277.19 L982.71 277.08 L981.95 277.02 L981.17 277.04 L980.39 277.14 L979.60 277.33 L978.84 277.61 L978.09 277.99 L977.40 278.48 L976.76 279.06 L976.21 279.73 L975.76 280.48 L975.43 281.30 L975.22 282.16 L975.15 283.05 L975.22 283.94 L975.43 284.80 L975.76 285.62 L976.21 286.37 L976.76 287.04 L977.40 287.62 L978.09 288.11 L978.84 288.49 L979.60 288.77 L980.39 288.96 L981.17 289.06 L981.95 289.08 L982.71 289.02 L983.45 288.91 L984.16 288.73 L984.85 288.51 L985.51 288.25 L986.14 287.95 L986.75 287.62 L987.33 287.27 L987.89 286.89 L988.42 286.50 L988.94 286.10 L989.43 285.68 L989.92 285.26 L990.39 284.82 L990.85 284.38 L991.30 283.94 L991.75 283.50 L992.20 283.05 L992.65 282.60 L993.10 282.16 L993.55 281.72 L994.01 281.28 L994.48 280.84 L994.97 280.42 L995.46 280.00 L995.98 279.60 L996.51 279.21 L997.07 278.83 L997.65 278.48 L998.26 278.15 L998.89 277.85 L999.55 277.59 L1000.24 277.37 L1000.95 277.19 L1001.69 277.08 L1002.45 277.02 L1003.23 277.04 L1004.01 277.14 L1004.80 277.33 L1005.56 277.61 L1006.31 277.99 L1007.00 278.48 L1007.64 279.06 L1008.19 279.73 L1008.64 280.48 L1008.97 281.30 L1009.18 282.16 L1009.25 283.05 Z" fill="none" stroke="#9ba3ae" stroke-width="1.35"/><path d="M1044 275h1v1h-1zM1045 275h1v1h-1zM1047 275h1v1h-1zM1048 275h1v1h-1zM1049 275h1v1h-1zM1050 275h1v1h-1zM1051 275h1v1h-1zM1052 275h1v1h-1zM1053 275h1v1h-1zM1054 275h1v1h-1zM1055 275h1v1h-1zM1056 275h1v1h-1zM1058 275h1v1h-1zM1059 275h1v1h-1zM1062 275h1v1h-1zM1063 275h1v1h-1zM1064 275h1v1h-1zM1065 275h1v1h-1zM1067 275h1v1h-1zM1068 275h1v1h-1zM1069 275h1v1h-1zM1070 275h1v1h-1zM1095 275h1v1h-1zM1102 275h1v1h-1zM1103 275h1v1h-1zM1105 275h1v1h-1zM1107 275h1v1h-1zM1108 275h1v1h-1zM1109 275h1v1h-1zM1110 275h1v1h-1zM1111 275h1v1h-1zM1112 275h1v1h-1zM1113 275h1v1h-1zM1115 275h1v1h-1zM1116 275h1v1h-1zM1117 275h1v1h-1zM1118 275h1v1h-1zM1119 275h1v1h-1zM1120 275h1v1h-1zM1121 275h1v1h-1zM1122 275h1v1h-1zM1123 275h1v1h-1zM1124 275h1v1h-1zM1125 275h1v1h-1zM1126 275h1v1h-1zM1127 275h1v1h-1zM1044 276h1v1h-1zM1045 276h1v1h-1zM1046 276h1v1h-1zM1047 276h1v1h-1zM1050 276h1v1h-1zM1052 276h1v1h-1zM1053 276h1v1h-1zM1055 276h1v1h-1zM1056 276h1v1h-1zM1058 276h1v1h-1zM1059 276h1v1h-1zM1060 276h1v1h-1zM1061 276h1v1h-1zM1062 276h1v1h-1zM1063 276h1v1h-1zM1064 276h1v1h-1zM1066 276h1v1h-1zM1068 276h1v1h-1zM1096 276h1v1h-1zM1100 276h1v1h-1zM1103 276h1v1h-1zM1104 276h1v1h-1zM1106 276h1v1h-1zM1107 276h1v1h-1zM1108 276h1v1h-1zM1110 276h1v1h-1zM1111 276h1v1h-1zM1113 276h1v1h-1zM1114 276h1v1h-1zM1115 276h1v1h-1zM1116 276h1v1h-1zM1117 276h1v1h-1zM1118 276h1v1h-1zM1119 276h1v1h-1zM1120 276h1v1h-1zM1121 276h1v1h-1zM1122 276h1v1h-1zM1125 276h1v1h-1zM1126 276h1v1h-1zM1127 276h1v1h-1zM1044 277h1v1h-1zM1045 277h1v1h-1zM1046 277h1v1h-1zM1048 277h1v1h-1zM1050 277h1v1h-1zM1051 277h1v1h-1zM1052 277h1v1h-1zM1053 277h1v1h-1zM1054 277h1v1h-1zM1056 277h1v1h-1zM1057 277h1v1h-1zM1058 277h1v1h-1zM1060 277h1v1h-1zM1061 277h1v1h-1zM1062 277h1v1h-1zM1064 277h1v1h-1zM1096 277h1v1h-1zM1099 277h1v1h-1zM1104 277h1v1h-1zM1105 277h1v1h-1zM1106 277h1v1h-1zM1107 277h1v1h-1zM1108 277h1v1h-1zM1109 277h1v1h-1zM1111 277h1v1h-1zM1112 277h1v1h-1zM1114 277h1v1h-1zM1115 277h1v1h-1zM1116 277h1v1h-1zM1117 277h1v1h-1zM1121 277h1v1h-1zM1122 277h1v1h-1zM1123 277h1v1h-1zM1124 277h1v1h-1zM1125 277h1v1h-1zM1044 278h1v1h-1zM1046 278h1v1h-1zM1047 278h1v1h-1zM1048 278h1v1h-1zM1049 278h1v1h-1zM1050 278h1v1h-1zM1051 278h1v1h-1zM1052 278h1v1h-1zM1053 278h1v1h-1zM1054 278h1v1h-1zM1057 278h1v1h-1zM1058 278h1v1h-1zM1059 278h1v1h-1zM1061 278h1v1h-1zM1062 278h1v1h-1zM1063 278h1v1h-1zM1064 278h1v1h-1zM1066 278h1v1h-1zM1067 278h1v1h-1zM1069 278h1v1h-1zM1072 278h1v1h-1zM1073 278h1v1h-1zM1092 278h1v1h-1zM1102 278h1v1h-1zM1105 278h1v1h-1zM1107 278h1v1h-1zM1108 278h1v1h-1zM1109 278h1v1h-1zM1110 278h1v1h-1zM1112 278h1v1h-1zM1113 278h1v1h-1zM1115 278h1v1h-1zM1117 278h1v1h-1zM1118 278h1v1h-1zM1119 278h1v1h-1zM1120 278h1v1h-1zM1122 278h1v1h-1zM1123 278h1v1h-1zM1124 278h1v1h-1zM1044 279h1v1h-1zM1045 279h1v1h-1zM1046 279h1v1h-1zM1049 279h1v1h-1zM1050 279h1v1h-1zM1051 279h1v1h-1zM1052 279h1v1h-1zM1053 279h1v1h-1zM1054 279h1v1h-1zM1055 279h1v1h-1zM1057 279h1v1h-1zM1058 279h1v1h-1zM1059 279h1v1h-1zM1060 279h1v1h-1zM1061 279h1v1h-1zM1062 279h1v1h-1zM1063 279h1v1h-1zM1064 279h1v1h-1zM1071 279h1v1h-1zM1101 279h1v1h-1zM1103 279h1v1h-1zM1104 279h1v1h-1zM1106 279h1v1h-1zM1107 279h1v1h-1zM1108 279h1v1h-1zM1109 279h1v1h-1zM1110 279h1v1h-1zM1111 279h1v1h-1zM1114 279h1v1h-1zM1115 279h1v1h-1zM1116 279h1v1h-1zM1117 279h1v1h-1zM1120 279h1v1h-1zM1121 279h1v1h-1zM1122 279h1v1h-1zM1123 279h1v1h-1zM1125 279h1v1h-1zM1126 279h1v1h-1zM1127 279h1v1h-1zM1044 280h1v1h-1zM1045 280h1v1h-1zM1046 280h1v1h-1zM1047 280h1v1h-1zM1048 280h1v1h-1zM1049 280h1v1h-1zM1050 280h1v1h-1zM1051 280h1v1h-1zM1052 280h1v1h-1zM1053 280h1v1h-1zM1054 280h1v1h-1zM1055 280h1v1h-1zM1056 280h1v1h-1zM1057 280h1v1h-1zM1058 280h1v1h-1zM1059 280h1v1h-1zM1060 280h1v1h-1zM1061 280h1v1h-1zM1062 280h1v1h-1zM1063 280h1v1h-1zM1064 280h1v1h-1zM1065 280h1v1h-1zM1069 280h1v1h-1zM1098 280h1v1h-1zM1099 280h1v1h-1zM1103 280h1v1h-1zM1104 280h1v1h-1zM1106 280h1v1h-1zM1107 280h1v1h-1zM1108 280h1v1h-1zM1109 280h1v1h-1zM1110 280h1v1h-1zM1111 280h1v1h-1zM1112 280h1v1h-1zM1113 280h1v1h-1zM1114 280h1v1h-1zM1115 280h1v1h-1zM1116 280h1v1h-1zM1117 280h1v1h-1zM1121 280h1v1h-1zM1122 280h1v1h-1zM1124 280h1v1h-1zM1125 280h1v1h-1zM1126 280h1v1h-1zM1127 280h1v1h-1zM1044 281h1v1h-1zM1045 281h1v1h-1zM1046 281h1v1h-1zM1047 281h1v1h-1zM1048 281h1v1h-1zM1050 281h1v1h-1zM1051 281h1v1h-1zM1052 281h1v1h-1zM1053 281h1v1h-1zM1054 281h1v1h-1zM1055 281h1v1h-1zM1056 281h1v1h-1zM1057 281h1v1h-1zM1060 281h1v1h-1zM1062 281h1v1h-1zM1063 281h1v1h-1zM1064 281h1v1h-1zM1065 281h1v1h-1zM1068 281h1v1h-1zM1092 281h1v1h-1zM1103 281h1v1h-1zM1105 281h1v1h-1zM1106 281h1v1h-1zM1107 281h1v1h-1zM1109 281h1v1h-1zM1110 281h1v1h-1zM1111 281h1v1h-1zM1112 281h1v1h-1zM1113 281h1v1h-1zM1114 281h1v1h-1zM1115 281h1v1h-1zM1116 281h1v1h-1zM1117 281h1v1h-1zM1118 281h1v1h-1zM1120 281h1v1h-1zM1121 281h1v1h-1zM1123 281h1v1h-1zM1125 281h1v1h-1zM1127 281h1v1h-1zM1044 282h1v1h-1zM1045 282h1v1h-1zM1046 282h1v1h-1zM1048 282h1v1h-1zM1049 282h1v1h-1zM1050 282h1v1h-1zM1051 282h1v1h-1zM1052 282h1v1h-1zM1053 282h1v1h-1zM1055 282h1v1h-1zM1056 282h1v1h-1zM1057 282h1v1h-1zM1058 282h1v1h-1zM1059 282h1v1h-1zM1060 282h1v1h-1zM1061 282h1v1h-1zM1062 282h1v1h-1zM1063 282h1v1h-1zM1064 282h1v1h-1zM1065 282h1v1h-1zM1066 282h1v1h-1zM1067 282h1v1h-1zM1068 282h1v1h-1zM1073 282h1v1h-1zM1097 282h1v1h-1zM1100 282h1v1h-1zM1101 282h1v1h-1zM1103 282h1v1h-1zM1104 282h1v1h-1zM1105 282h1v1h-1zM1106 282h1v1h-1zM1107 282h1v1h-1zM1108 282h1v1h-1zM1109 282h1v1h-1zM1110 282h1v1h-1zM1111 282h1v1h-1zM1114 282h1v1h-1zM1115 282h1v1h-1zM1116 282h1v1h-1zM1118 282h1v1h-1zM1119 282h1v1h-1zM1120 282h1v1h-1zM1121 282h1v1h-1zM1122 282h1v1h-1zM1123 282h1v1h-1zM1124 282h1v1h-1zM1125 282h1v1h-1zM1126 282h1v1h-1zM1127 282h1v1h-1zM1044 283h1v1h-1zM1048 283h1v1h-1zM1049 283h1v1h-1zM1050 283h1v1h-1zM1051 283h1v1h-1zM1052 283h1v1h-1zM1053 283h1v1h-1zM1054 283h1v1h-1zM1055 283h1v1h-1zM1056 283h1v1h-1zM1057 283h1v1h-1zM1058 283h1v1h-1zM1059 283h1v1h-1zM1060 283h1v1h-1zM1061 283h1v1h-1zM1062 283h1v1h-1zM1063 283h1v1h-1zM1066 283h1v1h-1zM1067 283h1v1h-1zM1071 283h1v1h-1zM1101 283h1v1h-1zM1102 283h1v1h-1zM1104 283h1v1h-1zM1105 283h1v1h-1zM1106 283h1v1h-1zM1107 283h1v1h-1zM1108 283h1v1h-1zM1109 283h1v1h-1zM1110 283h1v1h-1zM1111 283h1v1h-1zM1112 283h1v1h-1zM1113 283h1v1h-1zM1114 283h1v1h-1zM1115 283h1v1h-1zM1119 283h1v1h-1zM1121 283h1v1h-1zM1122 283h1v1h-1zM1123 283h1v1h-1zM1126 283h1v1h-1zM1127 283h1v1h-1zM1044 284h1v1h-1zM1045 284h1v1h-1zM1046 284h1v1h-1zM1047 284h1v1h-1zM1048 284h1v1h-1zM1049 284h1v1h-1zM1050 284h1v1h-1zM1051 284h1v1h-1zM1053 284h1v1h-1zM1054 284h1v1h-1zM1055 284h1v1h-1zM1057 284h1v1h-1zM1058 284h1v1h-1zM1059 284h1v1h-1zM1060 284h1v1h-1zM1061 284h1v1h-1zM1063 284h1v1h-1zM1065 284h1v1h-1zM1068 284h1v1h-1zM1069 284h1v1h-1zM1072 284h1v1h-1zM1107 284h1v1h-1zM1108 284h1v1h-1zM1109 284h1v1h-1zM1111 284h1v1h-1zM1112 284h1v1h-1zM1113 284h1v1h-1zM1114 284h1v1h-1zM1116 284h1v1h-1zM1117 284h1v1h-1zM1118 284h1v1h-1zM1119 284h1v1h-1zM1120 284h1v1h-1zM1122 284h1v1h-1zM1123 284h1v1h-1zM1124 284h1v1h-1zM1125 284h1v1h-1zM1126 284h1v1h-1zM1127 284h1v1h-1zM1044 285h1v1h-1zM1045 285h1v1h-1zM1046 285h1v1h-1zM1048 285h1v1h-1zM1049 285h1v1h-1zM1050 285h1v1h-1zM1051 285h1v1h-1zM1052 285h1v1h-1zM1053 285h1v1h-1zM1054 285h1v1h-1zM1055 285h1v1h-1zM1056 285h1v1h-1zM1057 285h1v1h-1zM1058 285h1v1h-1zM1059 285h1v1h-1zM1060 285h1v1h-1zM1061 285h1v1h-1zM1063 285h1v1h-1zM1064 285h1v1h-1zM1067 285h1v1h-1zM1071 285h1v1h-1zM1072 285h1v1h-1zM1104 285h1v1h-1zM1105 285h1v1h-1zM1106 285h1v1h-1zM1107 285h1v1h-1zM1108 285h1v1h-1zM1112 285h1v1h-1zM1113 285h1v1h-1zM1114 285h1v1h-1zM1115 285h1v1h-1zM1116 285h1v1h-1zM1117 285h1v1h-1zM1119 285h1v1h-1zM1121 285h1v1h-1zM1122 285h1v1h-1zM1123 285h1v1h-1zM1125 285h1v1h-1zM1127 285h1v1h-1zM1044 286h1v1h-1zM1045 286h1v1h-1zM1046 286h1v1h-1zM1048 286h1v1h-1zM1049 286h1v1h-1zM1050 286h1v1h-1zM1051 286h1v1h-1zM1052 286h1v1h-1zM1053 286h1v1h-1zM1054 286h1v1h-1zM1055 286h1v1h-1zM1056 286h1v1h-1zM1057 286h1v1h-1zM1058 286h1v1h-1zM1061 286h1v1h-1zM1062 286h1v1h-1zM1063 286h1v1h-1zM1065 286h1v1h-1zM1068 286h1v1h-1zM1071 286h1v1h-1zM1097 286h1v1h-1zM1098 286h1v1h-1zM1099 286h1v1h-1zM1102 286h1v1h-1zM1103 286h1v1h-1zM1105 286h1v1h-1zM1106 286h1v1h-1zM1107 286h1v1h-1zM1108 286h1v1h-1zM1109 286h1v1h-1zM1110 286h1v1h-1zM1111 286h1v1h-1zM1113 286h1v1h-1zM1114 286h1v1h-1zM1115 286h1v1h-1zM1116 286h1v1h-1zM1118 286h1v1h-1zM1119 286h1v1h-1zM1120 286h1v1h-1zM1121 286h1v1h-1zM1122 286h1v1h-1zM1123 286h1v1h-1zM1125 286h1v1h-1zM1126 286h1v1h-1zM1127 286h1v1h-1zM1044 287h1v1h-1zM1045 287h1v1h-1zM1046 287h1v1h-1zM1047 287h1v1h-1zM1048 287h1v1h-1zM1049 287h1v1h-1zM1050 287h1v1h-1zM1051 287h1v1h-1zM1053 287h1v1h-1zM1054 287h1v1h-1zM1055 287h1v1h-1zM1057 287h1v1h-1zM1058 287h1v1h-1zM1059 287h1v1h-1zM1060 287h1v1h-1zM1061 287h1v1h-1zM1063 287h1v1h-1zM1066 287h1v1h-1zM1069 287h1v1h-1zM1070 287h1v1h-1zM1098 287h1v1h-1zM1100 287h1v1h-1zM1102 287h1v1h-1zM1105 287h1v1h-1zM1106 287h1v1h-1zM1107 287h1v1h-1zM1108 287h1v1h-1zM1109 287h1v1h-1zM1112 287h1v1h-1zM1113 287h1v1h-1zM1114 287h1v1h-1zM1115 287h1v1h-1zM1116 287h1v1h-1zM1117 287h1v1h-1zM1119 287h1v1h-1zM1120 287h1v1h-1zM1121 287h1v1h-1zM1122 287h1v1h-1zM1123 287h1v1h-1zM1124 287h1v1h-1zM1125 287h1v1h-1zM1126 287h1v1h-1zM1127 287h1v1h-1zM1044 288h1v1h-1zM1045 288h1v1h-1zM1046 288h1v1h-1zM1047 288h1v1h-1zM1048 288h1v1h-1zM1049 288h1v1h-1zM1051 288h1v1h-1zM1052 288h1v1h-1zM1053 288h1v1h-1zM1054 288h1v1h-1zM1055 288h1v1h-1zM1056 288h1v1h-1zM1057 288h1v1h-1zM1058 288h1v1h-1zM1062 288h1v1h-1zM1063 288h1v1h-1zM1064 288h1v1h-1zM1071 288h1v1h-1zM1099 288h1v1h-1zM1104 288h1v1h-1zM1106 288h1v1h-1zM1107 288h1v1h-1zM1108 288h1v1h-1zM1110 288h1v1h-1zM1111 288h1v1h-1zM1112 288h1v1h-1zM1113 288h1v1h-1zM1115 288h1v1h-1zM1116 288h1v1h-1zM1117 288h1v1h-1zM1118 288h1v1h-1zM1119 288h1v1h-1zM1122 288h1v1h-1zM1123 288h1v1h-1zM1124 288h1v1h-1zM1125 288h1v1h-1zM1126 288h1v1h-1zM1044 289h1v1h-1zM1045 289h1v1h-1zM1048 289h1v1h-1zM1049 289h1v1h-1zM1050 289h1v1h-1zM1053 289h1v1h-1zM1055 289h1v1h-1zM1056 289h1v1h-1zM1057 289h1v1h-1zM1060 289h1v1h-1zM1061 289h1v1h-1zM1062 289h1v1h-1zM1064 289h1v1h-1zM1065 289h1v1h-1zM1067 289h1v1h-1zM1071 289h1v1h-1zM1075 289h1v1h-1zM1100 289h1v1h-1zM1102 289h1v1h-1zM1104 289h1v1h-1zM1105 289h1v1h-1zM1106 289h1v1h-1zM1107 289h1v1h-1zM1108 289h1v1h-1zM1109 289h1v1h-1zM1110 289h1v1h-1zM1112 289h1v1h-1zM1113 289h1v1h-1zM1114 289h1v1h-1zM1115 289h1v1h-1zM1116 289h1v1h-1zM1117 289h1v1h-1zM1118 289h1v1h-1zM1121 289h1v1h-1zM1122 289h1v1h-1zM1123 289h1v1h-1zM1124 289h1v1h-1zM1126 289h1v1h-1zM1127 289h1v1h-1zM1044 290h1v1h-1zM1045 290h1v1h-1zM1046 290h1v1h-1zM1047 290h1v1h-1zM1048 290h1v1h-1zM1049 290h1v1h-1zM1050 290h1v1h-1zM1052 290h1v1h-1zM1053 290h1v1h-1zM1055 290h1v1h-1zM1056 290h1v1h-1zM1057 290h1v1h-1zM1058 290h1v1h-1zM1059 290h1v1h-1zM1060 290h1v1h-1zM1061 290h1v1h-1zM1062 290h1v1h-1zM1064 290h1v1h-1zM1065 290h1v1h-1zM1066 290h1v1h-1zM1069 290h1v1h-1zM1076 290h1v1h-1zM1098 290h1v1h-1zM1102 290h1v1h-1zM1104 290h1v1h-1zM1106 290h1v1h-1zM1107 290h1v1h-1zM1108 290h1v1h-1zM1109 290h1v1h-1zM1111 290h1v1h-1zM1112 290h1v1h-1zM1113 290h1v1h-1zM1114 290h1v1h-1zM1115 290h1v1h-1zM1117 290h1v1h-1zM1118 290h1v1h-1zM1119 290h1v1h-1zM1121 290h1v1h-1zM1122 290h1v1h-1zM1123 290h1v1h-1zM1124 290h1v1h-1zM1125 290h1v1h-1zM1127 290h1v1h-1z" fill="#a6aeb9"/><g fill="none" stroke="#9ba3ae" stroke-width="1.2" stroke-linecap="round" stroke-linejoin="round">
<path d="M34.6 597.3 L29.3 602.5 L34.6 607.6"/><path d="M1178.2 597.3 L1183.5 602.5 L1178.2 607.6"/></g><path d="M293.07 846.6 H297.07 M295.07 844.6 V848.6" stroke="#a0a6b0" stroke-width="1.4"/><path d="M362.01 846.6 H366.01 M364.01 844.6 V848.6" stroke="#a0a6b0" stroke-width="1.4"/><path d="M430.95 846.6 H434.95 M432.95 844.6 V848.6" stroke="#a0a6b0" stroke-width="1.4"/><path d="M499.89 846.6 H503.89 M501.89 844.6 V848.6" stroke="#a0a6b0" stroke-width="1.4"/><path d="M568.83 846.6 H572.83 M570.83 844.6 V848.6" stroke="#a0a6b0" stroke-width="1.4"/><path d="M844.59 846.6 H848.59 M846.59 844.6 V848.6" stroke="#a0a6b0" stroke-width="1.4"/><path d="M913.53 846.6 H917.53 M915.53 844.6 V848.6" stroke="#a0a6b0" stroke-width="1.4"/><path d="M982.47 846.6 H986.47 M984.47 844.6 V848.6" stroke="#a0a6b0" stroke-width="1.4"/><path d="M1051.41 846.6 H1055.41 M1053.41 844.6 V848.6" stroke="#a0a6b0" stroke-width="1.4"/><path d="M1120.35 846.6 H1124.35 M1122.35 844.6 V848.6" stroke="#a0a6b0" stroke-width="1.4"/><path d="M1170.6 841.4 H1180 A1.8 1.8 0 0 1 1181.8 843.2 V849.8 A1.8 1.8 0 0 1 1180 851.6 H1170.6 L1166.6 846.5 Z" fill="#6c6c7a"/>
<path d="M1172.6 844.2 L1177 848.8 M1177 844.2 L1172.6 848.8" stroke="#2d2d37" stroke-width="1.2"/>
</svg>
</div>
</body></html>
